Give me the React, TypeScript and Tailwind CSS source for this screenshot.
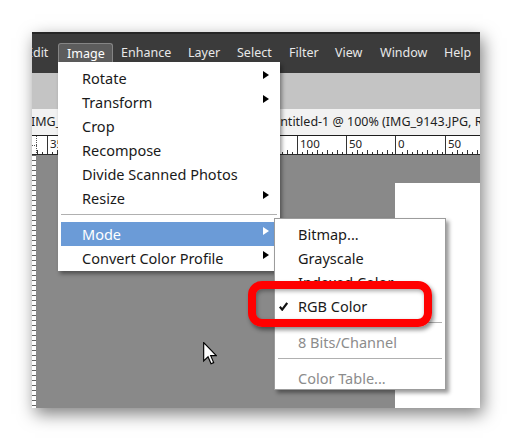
import React from "react";

type Item = { t: string; arrow?: boolean; hl?: boolean; sep?: boolean; check?: boolean; dis?: boolean };

const mainItems: Item[] = [
  { t: "Rotate", arrow: true },
  { t: "Transform", arrow: true },
  { t: "Crop" },
  { t: "Recompose" },
  { t: "Divide Scanned Photos" },
  { t: "Resize", arrow: true },
  { t: "", sep: true },
  { t: "Mode", arrow: true, hl: true },
  { t: "Convert Color Profile", arrow: true },
];

const subItems: Item[] = [
  { t: "Bitmap..." },
  { t: "Grayscale" },
  { t: "Indexed Color" },
  { t: "RGB Color", check: true },
  { t: "", sep: true },
  { t: "8 Bits/Channel", dis: true },
  { t: "", sep: true },
  { t: "Color Table...", dis: true },
];

const ticks = [15, 65, 115, 165, 215, 265, 314, 363, 413];
const labels = ["350", "300", "250", "200", "150", "100", "50", "0", "50"];

function Ruler() {
  const minors: React.ReactNode[] = [];
  for (let x = -35; x < 460; x += 5) {
    const k = ((x - 15) % 50 + 50) % 50;
    if (k === 0) continue;
    const h = k % 10 === 0 ? 4 : 2;
    minors.push(<line key={x} x1={x + 0.5} x2={x + 0.5} y1={18 - h} y2={18} stroke="#333" strokeWidth={1} />);
  }
  return (
    <svg width="448" height="18" className="block">
      <rect x="0" y="0" width="448" height="18" fill="#ffffff" />
      {minors}
      {ticks.map((x, i) => (
        <g key={x}>
          <line x1={x + 0.5} x2={x + 0.5} y1={0} y2={18} stroke="#333" strokeWidth={1} />
          <text x={x + 3} y={12} fontSize="11.5" fill="#222" fontFamily="'Noto Sans', sans-serif">
            {labels[i]}
          </text>
        </g>
      ))}
      <rect x="0" y="0" width="5" height="18" fill="#ffffff" />
      <line x1="4.5" x2="4.5" y1="0" y2="18" stroke="#555" strokeDasharray="1 1" />
      <line x1="0" x2="5" y1="9.5" y2="9.5" stroke="#555" strokeDasharray="1 1" />
    </svg>
  );
}

function Arrow({ white }: { white?: boolean }) {
  return (
    <span
      className={
        white
          ? "w-0 h-0 -translate-y-[3px] border-y-[4px] border-y-transparent border-l-[6px] border-l-white"
          : "w-0 h-0 -translate-y-[3px] border-y-[4px] border-y-transparent border-l-[6px] border-l-black"
      }
    />
  );
}

function Cursor() {
  return (
    <svg width="14" height="23" viewBox="0 0 12 20" className="block">
      <path d="M0.5 0.5 V16.5 L4.3 12.8 L6.9 18.9 L9.2 17.9 L6.6 11.9 H11.5 Z" fill="#fff" stroke="#000" strokeWidth="1" strokeLinejoin="miter" />
    </svg>
  );
}

export default function App() {
  return (
    <div className="w-[512px] h-[440px] bg-white pt-[32px] pl-[32px] font-['Noto_Sans',sans-serif]">
      <div className="relative w-[448px] h-[376px] overflow-hidden flex flex-col shadow-[3px_6px_16px_rgba(0,0,0,0.5)]">
        {/* menubar */}
        <div className="h-[41px] bg-[#3b3b3b] border-t-2 border-[#262626] pt-[9px]">
          <div className="flex items-start ml-[-6px] text-[12.5px] text-[#e8e8e8] leading-[19px]">
            <div className="w-[32px] h-[19px] shrink-0">Edit</div>
            <div className="w-[55px] h-[20px] shrink-0 pl-[8px] bg-[#5c5c5c] border border-b-0 border-[#858585] rounded-t-[3px] text-white">Image</div>
            <div className="ml-[8px] w-[67px] shrink-0">Enhance</div>
            <div className="w-[49px] shrink-0">Layer</div>
            <div className="w-[52px] shrink-0">Select</div>
            <div className="w-[46px] shrink-0">Filter</div>
            <div className="w-[45px] shrink-0">View</div>
            <div className="w-[64px] shrink-0">Window</div>
            <div className="shrink-0">Help</div>
          </div>
        </div>
        {/* gray band */}
        <div className="h-[36px] bg-[#c4c4c4]" />
        {/* tab row */}
        <div className="h-[27px] bg-[#f2f2f2] border-b border-[#1e1e1e] flex items-center text-[12.5px] text-[#1e1e1e] whitespace-nowrap">
          <div className="ml-[-1px] w-[240px] shrink-0">IMG_9143.JPG @ 33.3%</div>
          <div className="shrink-0">Untitled-1 @ 100% (IMG_9143.JPG, RGB/8)</div>
        </div>
        {/* ruler */}
        <div className="h-[19px] border-b border-[#2a2a2a]">
          <Ruler />
        </div>
        {/* canvas */}
        <div className="flex-1 flex">
          <div className="w-[4px] bg-white bg-[image:repeating-linear-gradient(to_bottom,#666_0px,#666_1px,#fff_1px,#fff_5px)]" />
          <div className="flex-1 bg-[#898989] flex justify-end pt-[28px]">
            <div className="w-[85px] bg-white" />
          </div>
        </div>

        {/* Image dropdown */}
        <div className="absolute left-[26px] top-[30px] w-[222px] h-[209px] bg-white pt-[4px] shadow-[2px_3px_4px_rgba(0,0,0,0.4)] text-[14.5px] text-[#1a1a1a]">
          {mainItems.map((it, i) =>
            it.sep ? (
              <div key={i} className="h-[12px] pt-[4px] mx-[3px]">
                <div className="h-px bg-[#b0b0b0]" />
              </div>
            ) : it.hl ? (
              <div key={i} className="h-[24px] mx-[3px] pl-[21px] pr-[8px] bg-[#6b9bd7] text-white flex items-center justify-between leading-[24px]">
                <span>{it.t}</span>
                <Arrow white />
              </div>
            ) : (
              <div key={i} className="h-[24px] pl-[24px] pr-[11px] flex items-center justify-between leading-[24px]">
                <span>{it.t}</span>
                {it.arrow ? <Arrow /> : null}
              </div>
            )
          )}
        </div>

        {/* Mode submenu */}
        <div className="absolute left-[242px] top-[186px] w-[172px] h-[172px] bg-white border border-[#9c9c9c] pt-[3px] shadow-[3px_3px_4px_rgba(0,0,0,0.4)] text-[14.5px] text-[#1a1a1a]">
          {subItems.map((it, i) =>
            it.sep ? (
              <div key={i} className="h-[12px] pt-[4px] mx-[3px]">
                <div className="h-px bg-[#b0b0b0]" />
              </div>
            ) : (
              <div key={i} className={it.dis ? "h-[24px] pl-[4px] flex items-center leading-[24px] text-[#8c8c8c]" : "h-[24px] pl-[4px] flex items-center leading-[24px]"}>
                <span className="w-[19px] flex items-center">
                  {it.check ? (
                    <svg width="9" height="9" viewBox="0 0 9 9" className="block">
                      <path d="M0.8 4.8 L3.2 7.6 L8.2 1" fill="none" stroke="#111" strokeWidth="2.2" />
                    </svg>
                  ) : null}
                </span>
                <span>{it.t}</span>
              </div>
            )
          )}
        </div>

        {/* red highlight box */}
        <div className="absolute left-[216px] top-[249px] w-[184px] h-[46px] rounded-[14px] border-[8px] border-[#ff0000] shadow-[2px_3px_4px_rgba(0,0,0,0.45),inset_1px_2px_4px_rgba(0,0,0,0.35)]" />

        {/* cursor */}
        <div className="absolute left-[171px] top-[310px]">
          <Cursor />
        </div>
      </div>
    </div>
  );
}
